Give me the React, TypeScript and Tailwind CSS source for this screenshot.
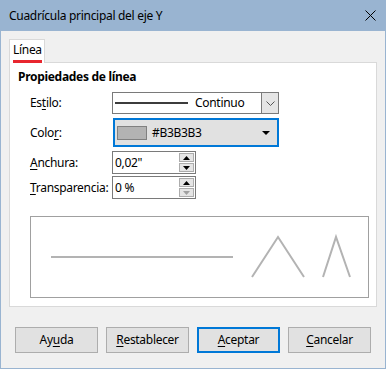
import React from "react";

const U = ({ children }: { children: React.ReactNode }) => (
  <span className="underline underline-offset-2 decoration-1">{children}</span>
);

function Spin({ value, downDisabled }: { value: string; downDisabled?: boolean }) {
  return (
    <div className="flex h-[23px] w-[84px] items-stretch border border-[#7a7a7a] bg-white">
      <div className="flex flex-1 items-center pl-[2px] text-[12px] text-black">{value}</div>
      <div className="flex w-[16px] flex-col gap-[1px] py-[1px] pr-[1px]">
        <div className="flex flex-1 items-center justify-center border border-[#acacac] bg-[#e5e5e5]">
          <svg width="7" height="4" viewBox="0 0 7 4"><path d="M0 4 L3.5 0 L7 4 Z" fill="#000" /></svg>
        </div>
        <div className="flex flex-1 items-center justify-center border border-[#acacac] bg-[#e5e5e5]">
          <svg width="7" height="4" viewBox="0 0 7 4"><path d="M0 0 L3.5 4 L7 0 Z" fill={downDisabled ? "#a0a0a0" : "#000"} /></svg>
        </div>
      </div>
    </div>
  );
}

function Btn({ children, focus }: { children: React.ReactNode; focus?: boolean }) {
  return (
    <div
      className={
        "flex h-[26px] w-[83px] items-center justify-center bg-[#e1e1e1] text-[12px] text-black " +
        (focus ? "border-2 border-[#0078d7]" : "border border-[#adadad]")
      }
    >
      {children}
    </div>
  );
}

export default function App() {
  return (
    <div
      className="flex h-[369px] w-[386px] flex-col bg-[#99b4d1] px-[1px] pb-[1px] tracking-[-0.3px]"
      style={{ fontFamily: '"Noto Sans", "Open Sans", sans-serif' }}
    >
      <div className="flex h-[31px] items-center justify-between pl-[8px] pr-[9px]">
        <span className="text-[12px] text-black">Cuadrícula principal del eje Y</span>
        <svg width="11" height="11" viewBox="0 0 11 11">
          <path d="M0.5 0.5 L10.5 10.5 M10.5 0.5 L0.5 10.5" stroke="#000" strokeWidth="1" />
        </svg>
      </div>
      <div className="flex flex-1 flex-col bg-[#f0f0f0] px-[8px] pt-[8px]">
        <div className="flex">
          <div className="relative z-10 -mb-[1px] flex h-[24px] w-[36px] flex-col border border-b-0 border-[#d9d9d9] bg-white pl-[3px] pt-[2px]">
            <span className="text-[12px] leading-[16px] text-black">Línea</span>
            <div className="mt-[2px] h-[4px] w-[29px] bg-[#e8262f]" />
          </div>
        </div>
        <div className="flex h-[245px] flex-col border border-[#d9d9d9] bg-white pl-[8px] pt-[6px]">
          <div className="text-[12px] font-bold leading-[16px] text-black">Propiedades de línea</div>
          <div className="ml-[12px] mt-[7px] flex flex-col text-[12px] text-black">
            <div className="flex h-[22px] items-center">
              <div className="w-[82px]">
                Es<U>t</U>ilo:
              </div>
              <div className="flex h-[22px] w-[167px] items-stretch border border-[#7a7a7a] bg-white">
                <div className="flex flex-1 items-center">
                  <div className="ml-[2px] h-[2px] w-[73px] bg-[#3c3c3c]" />
                  <span className="ml-[7px]">Continuo</span>
                </div>
                <div className="flex w-[17px] items-center justify-center border-l border-[#7a7a7a] bg-[#e5e5e5]">
                  <svg width="9" height="5" viewBox="0 0 9 5">
                    <path d="M0.5 0.5 L4.5 4.5 L8.5 0.5" stroke="#555" fill="none" strokeWidth="1" />
                  </svg>
                </div>
              </div>
            </div>
            <div className="mt-[4px] flex h-[29px] items-center">
              <div className="w-[83px]">
                Colo<U>r</U>:
              </div>
              <div className="flex h-[29px] w-[166px] items-center border-2 border-[#0078d7] bg-[#e1e1e1] pl-[2px] pr-[7px]">
                <div className="h-[14px] w-[30px] border border-[#808080] bg-[#b3b3b3]" />
                <span className="ml-[5px] flex-1">#B3B3B3</span>
                <svg width="8" height="4" viewBox="0 0 8 4">
                  <path d="M0 0 L8 0 L4 4 Z" fill="#000" />
                </svg>
              </div>
            </div>
            <div className="mt-[4px] flex h-[23px] items-center">
              <div className="w-[82px]">
                <U>A</U>nchura:
              </div>
              <Spin value={'0,02"'} />
            </div>
            <div className="mt-[2px] flex h-[23px] items-center">
              <div className="w-[82px]">
                <U>T</U>ransparencia:
              </div>
              <Spin value="0 %" downDisabled />
            </div>
          </div>
          <div className="ml-[12px] mt-[17px] h-[82px] w-[339px] border border-[#a0a0a0] bg-white">
            <svg width="337" height="80" viewBox="0 0 337 80">
              <g stroke="#b3b3b3" strokeWidth="2" fill="none">
                <path d="M20 40 L202 40" />
                <path d="M221 60 L247 20 L273 60" />
                <path d="M292 60 L305 20 L319 60" />
              </g>
            </svg>
          </div>
        </div>
        <div className="mt-[20px] flex gap-[8px] pl-[6px]">
          <Btn>
            Ay<U>u</U>da
          </Btn>
          <Btn>
            <U>R</U>establecer
          </Btn>
          <Btn focus>
            <U>A</U>ceptar
          </Btn>
          <Btn>
            <U>C</U>ancelar
          </Btn>
        </div>
      </div>
    </div>
  );
}
